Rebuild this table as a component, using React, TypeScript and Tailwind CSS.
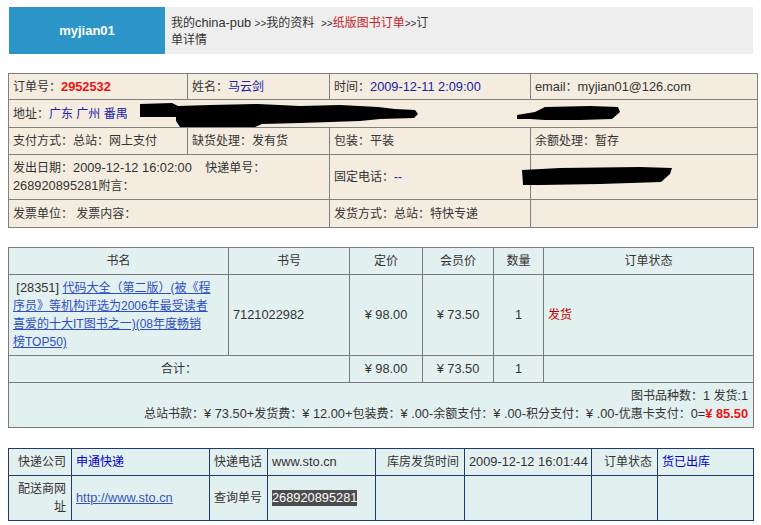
const font = "font-['Liberation_Sans','Noto_Sans_CJK_SC',sans-serif]"

const orderCell = 'border border-[#808080] px-[4px] align-middle'
const bookCell = 'border border-[#7a7a7a] px-[4px] align-middle'
const shipCell = 'border border-[#1d3c6c] px-[4px] align-middle'

// latin runs render a touch wider in the original
function L({ children }: { children: React.ReactNode }) {
  return <span className="text-[12.8px]">{children}</span>
}

function Header() {
  return (
    <div className="flex h-[47px] ml-px w-[744px]">
      <div className="w-[156px] bg-[#2b95c8] flex items-center justify-center text-white font-bold text-[13px]">
        myjian01
      </div>
      <div className="flex-1 bg-[#eeeeee] pl-[6px] pt-[7px] text-[12px] leading-[17px] text-[#333]">
        我的<L>china-pub</L> <span className="text-[10px]">&gt;&gt;</span>我的资料&nbsp;&nbsp;
        <span className="text-[10px]">&gt;&gt;</span>
        <span className="text-[#c41e2a]">纸版图书订单</span>
        <span className="text-[10px]">&gt;&gt;</span>订
        <br />
        单详情
      </div>
    </div>
  )
}

function OrderInfo() {
  const val = 'text-[#2020a8]'
  return (
    <table className="mt-[19px] w-[749px] table-fixed border-collapse bg-[#f3ecdf] text-[12px] leading-[18px] text-[#333]">
      <colgroup>
        <col className="w-[179px]" />
        <col className="w-[142px]" />
        <col className="w-[201px]" />
        <col className="w-[227px]" />
      </colgroup>
      <tbody>
        <tr className="h-[26px]">
          <td className={orderCell}>
            订单号：<span className="font-bold text-[#ee1111]"><L>2952532</L></span>
          </td>
          <td className={orderCell}>
            姓名：<span className={val}>马云剑</span>
          </td>
          <td className={orderCell}>
            时间：<span className={val}><L>2009-12-11 2:09:00</L></span>
          </td>
          <td className={orderCell}>
            <L>email</L>：<L>myjian01@126.com</L>
          </td>
        </tr>
        <tr className="h-[28px]">
          <td className={orderCell} colSpan={4}>
            地址：<span className={val}>广东 广州 番禺</span>
          </td>
        </tr>
        <tr className="h-[27px]">
          <td className={orderCell}>支付方式：总站：网上支付</td>
          <td className={orderCell}>缺货处理：发有货</td>
          <td className={orderCell}>包装：平装</td>
          <td className={orderCell}>余额处理：暂存</td>
        </tr>
        <tr className="h-[45px]">
          <td className={orderCell} colSpan={2}>
            发出日期：<L>2009-12-12 16:02:00</L>&nbsp;&nbsp;&nbsp; 快递单号：<L>268920895281</L>附言：
          </td>
          <td className={orderCell}>
            固定电话：<span className={val}>--</span>
          </td>
          <td className={orderCell}></td>
        </tr>
        <tr className="h-[28px]">
          <td className={orderCell} colSpan={2}>
            发票单位： 发票内容：
          </td>
          <td className={orderCell}>发货方式：总站：特快专递</td>
          <td className={orderCell}></td>
        </tr>
      </tbody>
    </table>
  )
}

function Books() {
  return (
    <table className="mt-[19px] w-[745px] table-fixed border-collapse bg-[#e3f0f0] text-[12px] leading-[18px] text-[#333]">
      <colgroup>
        <col className="w-[220px]" />
        <col className="w-[121px]" />
        <col className="w-[73px]" />
        <col className="w-[71px]" />
        <col className="w-[50px]" />
        <col className="w-[210px]" />
      </colgroup>
      <tbody>
        <tr className="h-[27px] text-center">
          <td className={bookCell}>书名</td>
          <td className={bookCell}>书号</td>
          <td className={bookCell}>定价</td>
          <td className={bookCell}>会员价</td>
          <td className={bookCell}>数量</td>
          <td className={bookCell}>订单状态</td>
        </tr>
        <tr className="h-[81px]">
          <td className={bookCell}>
            &nbsp;<L>[28351]</L>{' '}
            <a href="#" className="text-[#2d4fc2] underline">
              代码大全（第二版）(被《程
              <br />
              序员》等机构评选为2006年最受读者
              <br />
              喜爱的十大IT图书之一)(08年度畅销
              <br />
              榜TOP50)
            </a>
          </td>
          <td className={bookCell}>
            <L>7121022982</L>
          </td>
          <td className={`${bookCell} text-center`}>
            <L>¥ 98.00</L>
          </td>
          <td className={`${bookCell} text-center`}>
            <L>¥ 73.50</L>
          </td>
          <td className={`${bookCell} text-center`}>
            <L>1</L>
          </td>
          <td className={bookCell}>
            <span className="text-[#c00000]">发货</span>
          </td>
        </tr>
        <tr className="h-[27px]">
          <td className={`${bookCell} text-center`} colSpan={2}>
            合计：
          </td>
          <td className={`${bookCell} text-center`}>
            <L>¥ 98.00</L>
          </td>
          <td className={`${bookCell} text-center`}>
            <L>¥ 73.50</L>
          </td>
          <td className={`${bookCell} text-center`}>
            <L>1</L>
          </td>
          <td className={bookCell}></td>
        </tr>
        <tr className="h-[45px]">
          <td className={`${bookCell} text-right leading-[17px] pr-[5px]`} colSpan={6}>
            图书品种数：<L>1</L> 发货:<L>1</L>
            <br />
            总站书款：<L>¥ 73.50+</L>发货费：<L>¥ 12.00+</L>包装费：<L>¥ .00-</L>余额支付：<L>¥ .00-</L>积分支付：<L>¥ .00-</L>优惠卡支付：<L>0=</L>
            <span className="font-bold text-[#ee1111]">
              <L>¥ 85.50</L>
            </span>
          </td>
        </tr>
      </tbody>
    </table>
  )
}

function Shipping() {
  const label = `${shipCell} text-right pr-[5px]`
  return (
    <table className="mt-[20px] w-[745px] table-fixed border-collapse bg-[#e3f0f0] text-[12px] leading-[18px] text-[#333]">
      <colgroup>
        <col className="w-[63px]" />
        <col className="w-[138px]" />
        <col className="w-[58px]" />
        <col className="w-[108px]" />
        <col className="w-[89px]" />
        <col className="w-[127px]" />
        <col className="w-[66px]" />
        <col className="w-[96px]" />
      </colgroup>
      <tbody>
        <tr className="h-[27px]">
          <td className={label}>快递公司</td>
          <td className={`${shipCell} text-[#0000cc]`}>申通快递</td>
          <td className={label}>快递电话</td>
          <td className={shipCell}>
            <L>www.sto.cn</L>
          </td>
          <td className={`${label} whitespace-nowrap`}>库房发货时间</td>
          <td className={`${shipCell} whitespace-nowrap`}>
            <L>2009-12-12 16:01:44</L>
          </td>
          <td className={label}>订单状态</td>
          <td className={`${shipCell} text-[#0000cc]`}>货已出库</td>
        </tr>
        <tr className="h-[45px]">
          <td className={label}>配送商网址</td>
          <td className={shipCell}>
            <a href="#" className="text-[#3355bb] underline">
              <L>http://www.sto.cn</L>
            </a>
          </td>
          <td className={label}>查询单号</td>
          <td className={`${shipCell} whitespace-nowrap`}>
            <span className="bg-[#4d4d4d] text-white py-px">
              <L>268920895281</L>
            </span>
          </td>
          <td className={shipCell}></td>
          <td className={shipCell}></td>
          <td className={shipCell}></td>
          <td className={shipCell}></td>
        </tr>
      </tbody>
    </table>
  )
}

function Redactions() {
  return (
    <svg
      className="absolute left-0 top-0 pointer-events-none"
      width="761"
      height="525"
      viewBox="0 0 761 525"
    >
      <path
        d="M140,104 L172,103 L178,106 L210,105 L258,104 L300,106 L340,105 L378,107 L395,109 L415,110 L418,114 L414,118 L380,119 L360,121 L300,123 L262,124 L255,127 L180,127 L176,121 L176,117 L140,117 Z"
        fill="#000"
      />
      <path
        d="M517,115 L535,112 L545,107 L590,106 L618,107 L620,112 L612,119 L580,120 L545,120 L530,119 L517,119 Z"
        fill="#000"
      />
      <path
        d="M522,170 L560,168 L640,167 L672,168 L670,174 L661,182 L600,184 L540,185 L523,185 Z"
        fill="#000"
      />
    </svg>
  )
}

export default function App() {
  return (
    <div className={`relative min-h-[525px] bg-white pl-2 pt-[7px] ${font}`}>
      <Header />
      <OrderInfo />
      <Books />
      <Shipping />
      <Redactions />
    </div>
  )
}
